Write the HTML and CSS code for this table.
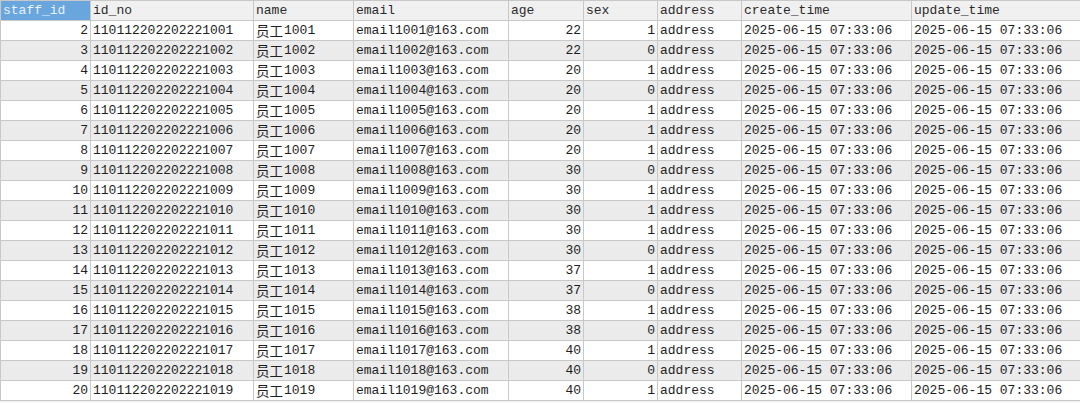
FILE: index.html
```html
<!DOCTYPE html>
<html lang="en">
  <head>
    <meta charset="UTF-8" />
    <meta name="viewport" content="width=device-width, initial-scale=1.0" />
    <title>staff</title>

    <link rel="stylesheet" href="styles.css">
  </head>
  <body>
    <table class="grid">
      <colgroup>
        <col class="c-id" />
        <col class="c-no" />
        <col class="c-name" />
        <col class="c-email" />
        <col class="c-age" />
        <col class="c-sex" />
        <col class="c-addr" />
        <col class="c-time" />
        <col class="c-time2" />
      </colgroup>
      <thead>
        <tr>
          <th class="selected">staff_id</th>
          <th>id_no</th>
          <th>name</th>
          <th>email</th>
          <th>age</th>
          <th>sex</th>
          <th>address</th>
          <th>create_time</th>
          <th>update_time</th>
        </tr>
      </thead>
      <tbody></tbody>
    </table>

    <script>
      const ages = [22, 22, 20, 20, 20, 20, 20, 30, 30, 30, 30, 30, 37, 37, 38, 38, 40, 40, 40]
      const sexes = [1, 0, 1, 0, 1, 1, 1, 0, 1, 1, 1, 0, 1, 0, 1, 0, 1, 0, 1]
      const stamp = "2025-06-15 07:33:06"

      document.querySelector(".grid tbody").innerHTML = ages
        .map((age, i) => {
          const n = 1001 + i
          return `<tr>
            <td class="num">${i + 2}</td>
            <td>11011220220222${n}</td>
            <td><span class="cjk">员工</span>${n}</td>
            <td>email${n}@163.com</td>
            <td class="num">${age}</td>
            <td class="num">${sexes[i]}</td>
            <td>address</td>
            <td>${stamp}</td>
            <td>${stamp}</td>
          </tr>`
        })
        .join("")
    </script>
  </body>
</html>
```

FILE: styles.css
```css
body {
  margin: 0;
  background: #f4f4f4;
}

.grid {
  width: 1080px;
  table-layout: fixed;
  border-collapse: collapse;
  font-family: "Liberation Mono", "DejaVu Sans Mono", monospace;
  font-size: 13px;
  color: #1e1e1e;
}

.c-id { width: 90px; }
.c-no { width: 163px; }
.c-name { width: 100px; }
.c-email { width: 155px; }
.c-age { width: 75px; }
.c-sex { width: 74px; }
.c-addr { width: 84px; }
.c-time { width: 170px; }
.c-time2 { width: 169px; }

.grid th,
.grid td {
  height: 19px;
  padding: 0 2px;
  border: 1px solid #c8c8c8;
  white-space: nowrap;
  overflow: hidden;
  line-height: 19px;
}

.grid th {
  background: #f0f0f0;
  font-weight: normal;
  text-align: left;
  color: #2a2a2a;
}

.grid th.selected {
  background: #6aa6de;
  color: #e8f2fc;
}

.grid tbody tr:nth-child(odd) td {
  background: #ffffff;
}

.grid tbody tr:nth-child(even) td {
  background: #ebebeb;
}

.grid td.num {
  text-align: right;
}

.cjk {
  font-family: "Noto Sans CJK SC", sans-serif;
  font-size: 13.5px;
  line-height: 13px;
  vertical-align: top;
  display: inline-block;
  height: 19px;
  padding-top: 3px;
  margin-right: 1px;
  box-sizing: border-box;
}
```
